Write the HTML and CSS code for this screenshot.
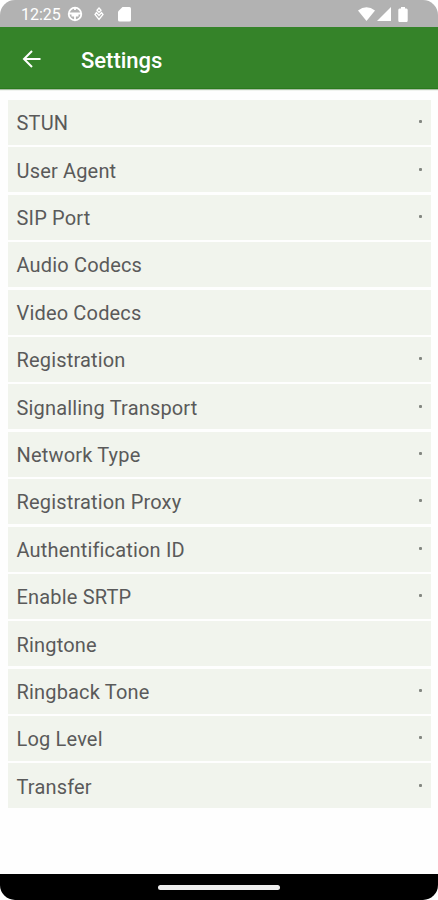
FILE: index.html
```html
<!DOCTYPE html>
<html lang="en">
<head>
    <meta charset="UTF-8">
    <meta name="viewport" content="width=device-width, initial-scale=1.0">
    <title>Settings</title>
    <link rel="stylesheet" href="styles.css">
</head>
<body>
    <div class="screen">
        <div class="status-bar">
            <span class="clock">12:25</span>
            <svg class="icon-wheel" width="16" height="16" viewBox="0 0 16 16" fill="none" stroke="#fff" stroke-width="1.8">
                <circle cx="8" cy="8" r="6.300"></circle>
                <path d="M2 7.500h12M8 8v6M8 1v3M4.500 9.500h7"></path>
            </svg>
            <svg class="icon-link" width="10" height="14" viewBox="0 0 10 14" fill="none" stroke="#fff" stroke-width="1.3">
                <path d="M5 1L7 3.200L5 5.400L3 3.200z"></path>
                <path d="M2.500 5.500L1 7.500L5 12.500L9 7.500L7.500 5.500L5 8.500z"></path>
            </svg>
            <svg class="icon-card" width="13" height="15" viewBox="0 0 13 15" fill="#fff">
                <path d="M4.500 0H11.500Q13 0 13 1.500V13Q13 14.500 11.500 14.500H1.500Q0 14.500 0 13V4.500z"></path>
            </svg>
            <div class="status-right">
                <svg width="17" height="14" viewBox="0 0 17 14" fill="#fff">
                    <path d="M0 3.500Q8.500-3 17 3.500L8.500 14z"></path>
                </svg>
                <svg class="icon-signal" width="14" height="14" viewBox="0 0 14 14" fill="#fff">
                    <path d="M14 0V14H0z"></path>
                </svg>
                <svg class="icon-battery" width="10" height="15" viewBox="0 0 10 15" fill="#fff">
                    <path d="M3 0H7V1.500H8.500Q9.700 1.500 9.700 3V13.500Q9.700 15 8.500 15H1.500Q.3 15 .3 13.500V3Q.3 1.500 1.500 1.500H3z"></path>
                </svg>
            </div>
        </div>

        <header class="app-bar">
            <svg class="back" width="20" height="18" viewBox="0 0 20 18" fill="none" stroke="#fff" stroke-width="2">
                <path d="M18.500 9H2M10 1L2 9l8 8"></path>
            </svg>
            <h1 class="title">Settings</h1>
        </header>

        <ul class="settings">
            <li class="row has-more">STUN</li>
            <li class="row has-more">User Agent</li>
            <li class="row has-more">SIP Port</li>
            <li class="row">Audio Codecs</li>
            <li class="row">Video Codecs</li>
            <li class="row has-more">Registration</li>
            <li class="row has-more">Signalling Transport</li>
            <li class="row has-more">Network Type</li>
            <li class="row has-more">Registration Proxy</li>
            <li class="row has-more">Authentification ID</li>
            <li class="row has-more">Enable SRTP</li>
            <li class="row">Ringtone</li>
            <li class="row has-more">Ringback Tone</li>
            <li class="row has-more">Log Level</li>
            <li class="row has-more">Transfer</li>
        </ul>

        <div class="nav-bar">
            <div class="nav-pill"></div>
        </div>
    </div>
</body>
</html>
```
FILE: styles.css
```css
* {
    box-sizing: border-box;
}

body {
    margin: 0;
    background-color: #fff;
    font-family: Roboto, sans-serif;
}

.screen {
    display: flex;
    flex-direction: column;
    width: 438px;
    height: 900px;
    overflow: hidden;
    border-radius: 15px;
    background-color: #fefefe;
}

/* Status bar */
.status-bar {
    display: flex;
    align-items: center;
    height: 27px;
    padding: 1px 30px 0 21px;
    background-color: #b2b2b2;
    color: #fff;
}

.clock {
    width: 39px;
    padding-top: 1px;
    font-size: 16px;
    line-height: 20px;
}

.icon-wheel {
    margin-left: 7px;
}

.icon-link {
    margin-left: 11px;
}

.icon-card {
    margin-left: 14px;
}

.status-right {
    display: flex;
    align-items: center;
    margin-left: auto;
}

.icon-signal {
    margin-left: 2px;
}

.icon-battery {
    margin-left: 7px;
}

/* App bar */
.app-bar {
    display: flex;
    align-items: center;
    height: 62px;
    padding: 2px 22px 0;
    background-color: #358329;
    border-bottom: 1px solid #2a7a1c;
    box-shadow: 0 1px 1px #aabfa5;
    color: #fff;
}

.title {
    margin: 4px 0 0 39px;
    font-size: 22px;
    font-weight: 500;
    line-height: 28px;
}

/* Settings list */
.settings {
    display: flex;
    flex: 1;
    flex-direction: column;
    gap: 2.4px;
    margin: 0;
    padding: 11px 7px 0 8px;
    list-style: none;
}

.row {
    display: flex;
    align-items: center;
    justify-content: space-between;
    height: 45px;
    padding: 1.5px 9px 0 8.5px;
    background-color: #f1f4ed;
    color: #5a5a5a;
    font-size: 20px;
    letter-spacing: 0.17px;
}

.has-more::after {
    content: "";
    width: 3px;
    height: 3px;
    margin-bottom: 3px;
    border-radius: 1px;
    background-color: #838781;
}

/* Gesture navigation */
.nav-bar {
    display: flex;
    justify-content: center;
    height: 26px;
    padding-top: 10.5px;
    background-color: #000;
}

.nav-pill {
    width: 122px;
    height: 5px;
    border-radius: 3px;
    background-color: #eee;
}
```
